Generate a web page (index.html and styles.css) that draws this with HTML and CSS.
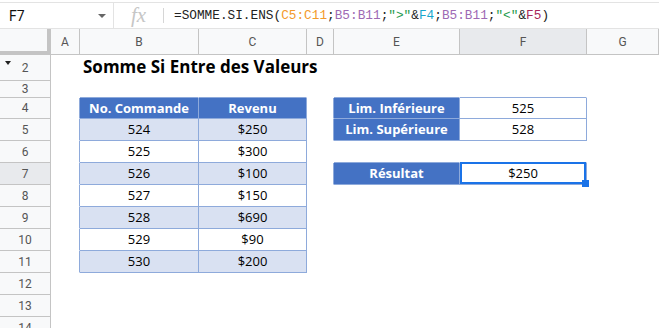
FILE: index.html
```html
<!DOCTYPE html>
<html lang="fr">
<head>
    <meta charset="UTF-8">
    <meta name="viewport" content="width=device-width, initial-scale=1.0">
    <title>Somme Si Entre des Valeurs</title>
    <link rel="stylesheet" href="styles.css">
</head>
<body>
    <div class="fbar">
        <div class="namebox"><span>F7</span><span class="caret"></span></div>
        <div class="fx">fx</div>
        <div class="fsep"></div>
        <div class="formula">=SOMME.SI.ENS(<span class="r1">C5:C11</span>;<span class="r2">B5:B11</span>;<span class="str">"&gt;"</span>&amp;<span class="r3">F4</span>;<span class="r2">B5:B11</span>;<span class="str">"&lt;"</span>&amp;<span class="r4">F5</span>)</div>
    </div>

    <div class="sheet">
        <!-- column headers -->
        <div class="corner"></div>
        <div class="ch">A</div>
        <div class="ch">B</div>
        <div class="ch">C</div>
        <div class="ch">D</div>
        <div class="ch">E</div>
        <div class="ch active">F</div>
        <div class="ch">G</div>

        <!-- row 2 -->
        <div class="rh"><span class="hidden-mark"></span>2</div>
        <div class="c"></div>
        <div class="c title">Somme Si Entre des Valeurs</div>
        <div class="c"></div>
        <div class="c"></div>
        <div class="c"></div>
        <div class="c"></div>
        <div class="c"></div>

        <!-- row 3 -->
        <div class="rh">3</div>
        <div class="c"></div>
        <div class="c bb"></div>
        <div class="c bb"></div>
        <div class="c"></div>
        <div class="c bb"></div>
        <div class="c bb"></div>
        <div class="c"></div>

        <!-- row 4 -->
        <div class="rh">4</div>
        <div class="c br"></div>
        <div class="c tc th">No. Commande</div>
        <div class="c tc th">Revenu</div>
        <div class="c br"></div>
        <div class="c tc th">Lim. Inférieure</div>
        <div class="c tc">525</div>
        <div class="c"></div>

        <!-- row 5 -->
        <div class="rh">5</div>
        <div class="c br"></div>
        <div class="c tc band">524</div>
        <div class="c tc band">$250</div>
        <div class="c br"></div>
        <div class="c tc th">Lim. Supérieure</div>
        <div class="c tc">528</div>
        <div class="c"></div>

        <!-- row 6 -->
        <div class="rh">6</div>
        <div class="c br"></div>
        <div class="c tc">525</div>
        <div class="c tc">$300</div>
        <div class="c"></div>
        <div class="c bb"></div>
        <div class="c bb"></div>
        <div class="c"></div>

        <!-- row 7 -->
        <div class="rh active">7</div>
        <div class="c br"></div>
        <div class="c tc band">526</div>
        <div class="c tc band">$100</div>
        <div class="c br"></div>
        <div class="c tc th">Résultat</div>
        <div class="c tc selected">$250<span class="sel-box"></span><span class="sel-handle"></span></div>
        <div class="c"></div>

        <!-- row 8 -->
        <div class="rh">8</div>
        <div class="c br"></div>
        <div class="c tc">527</div>
        <div class="c tc">$150</div>
        <div class="c"></div>
        <div class="c"></div>
        <div class="c"></div>
        <div class="c"></div>

        <!-- row 9 -->
        <div class="rh">9</div>
        <div class="c br"></div>
        <div class="c tc band">528</div>
        <div class="c tc band">$690</div>
        <div class="c"></div>
        <div class="c"></div>
        <div class="c"></div>
        <div class="c"></div>

        <!-- row 10 -->
        <div class="rh">10</div>
        <div class="c br"></div>
        <div class="c tc">529</div>
        <div class="c tc">$90</div>
        <div class="c"></div>
        <div class="c"></div>
        <div class="c"></div>
        <div class="c"></div>

        <!-- row 11 -->
        <div class="rh">11</div>
        <div class="c br"></div>
        <div class="c tc band">530</div>
        <div class="c tc band">$200</div>
        <div class="c"></div>
        <div class="c"></div>
        <div class="c"></div>
        <div class="c"></div>

        <!-- row 12 -->
        <div class="rh">12</div>
        <div class="c"></div>
        <div class="c"></div>
        <div class="c"></div>
        <div class="c"></div>
        <div class="c"></div>
        <div class="c"></div>
        <div class="c"></div>

        <!-- row 13 -->
        <div class="rh">13</div>
        <div class="c"></div>
        <div class="c"></div>
        <div class="c"></div>
        <div class="c"></div>
        <div class="c"></div>
        <div class="c"></div>
        <div class="c"></div>

        <!-- row 14 -->
        <div class="rh">14</div>
        <div class="c"></div>
        <div class="c"></div>
        <div class="c"></div>
        <div class="c"></div>
        <div class="c"></div>
        <div class="c"></div>
        <div class="c"></div>
    </div>
</body>
</html>
```

FILE: styles.css
```css
body {
    margin: 0;
    font-family: Roboto, Arial, sans-serif;
    background: white;
    overflow: hidden;
}

/* formula bar */
.fbar {
    display: flex;
    align-items: center;
    height: 25px;
    margin-top: 2px;
    border-top: 1px solid #e3e3e3;
    border-bottom: 1px solid #e3e3e3;
}

.namebox {
    width: 114px;
    height: 100%;
    box-sizing: border-box;
    display: flex;
    align-items: center;
    justify-content: space-between;
    padding: 0 7px 0 9px;
    border-right: 1px solid #e3e3e3;
    font-size: 14px;
    color: #111;
}

.caret {
    width: 0;
    height: 0;
    border-left: 4px solid transparent;
    border-right: 4px solid transparent;
    border-top: 4px solid #666;
}

.fx {
    width: 49px;
    text-align: center;
    font-family: "Liberation Serif", serif;
    font-style: italic;
    font-size: 21px;
    color: #c6c6c6;
    line-height: 25px;
}

.fsep {
    width: 1px;
    height: 15px;
    background: #d6d6d6;
}

.formula {
    padding-left: 10px;
    font-family: "Liberation Mono", monospace;
    font-size: 12.75px;
    color: #222;
    white-space: nowrap;
}

.r1 { color: #f39a2b; }
.r2 { color: #9e69b4; }
.r3 { color: #16a6cc; }
.r4 { color: #a8285b; }
.str { color: #1f9b4c; }

/* grid */
.sheet {
    display: grid;
    grid-template-columns: 51px 29px 119px 108px 27px 126px 127px 1fr;
    grid-template-rows: 26px 26px 17px 21px repeat(10, 22px);
}

.sheet > div {
    box-sizing: border-box;
}

.corner {
    background: #f8f9fa;
    border-right: 4px solid #c4c4c4;
    border-bottom: 4px solid #c4c4c4;
}

.ch {
    background: #f8f9fa;
    border-right: 1px solid #c4c4c4;
    border-bottom: 1px solid #c4c4c4;
    display: flex;
    align-items: center;
    justify-content: center;
    font-size: 12px;
    color: #555;
}

.rh {
    position: relative;
    background: #f8f9fa;
    border-right: 1px solid #c4c4c4;
    border-bottom: 1px solid #c4c4c4;
    display: flex;
    align-items: center;
    justify-content: center;
    font-size: 12px;
    color: #555;
}

.ch.active,
.rh.active {
    background: #e8eaed;
}

.hidden-mark {
    position: absolute;
    left: 5px;
    top: 6px;
    width: 0;
    height: 0;
    border-left: 3px solid transparent;
    border-right: 3px solid transparent;
    border-top: 4px solid #222;
}

.c {
    border-right: 1px solid transparent;
    border-bottom: 1px solid transparent;
    display: flex;
    align-items: center;
    justify-content: center;
    padding-bottom: 1px;
    font-family: "Open Sans", sans-serif;
    font-size: 13px;
    color: #000;
    white-space: nowrap;
}

.title {
    justify-content: flex-start;
    align-items: flex-end;
    padding: 0 0 2px 3px;
    font-size: 17px;
    font-weight: bold;
    overflow: visible;
    position: relative;
    z-index: 1;
}

.tc {
    border-color: #8eaadb;
}

.br {
    border-right-color: #8eaadb;
}

.bb {
    border-bottom-color: #8eaadb;
}

.th {
    background: #4472c4;
    color: white;
    font-weight: bold;
}

.band {
    background: #d9e1f2;
}

.selected {
    position: relative;
}

.sel-box {
    position: absolute;
    top: -1px;
    left: 0;
    right: 0;
    bottom: 0;
    border: 2px solid #1a73e8;
}

.sel-handle {
    position: absolute;
    right: -3px;
    bottom: -3px;
    width: 7px;
    height: 7px;
    background: #1a73e8;
    z-index: 2;
}
```
